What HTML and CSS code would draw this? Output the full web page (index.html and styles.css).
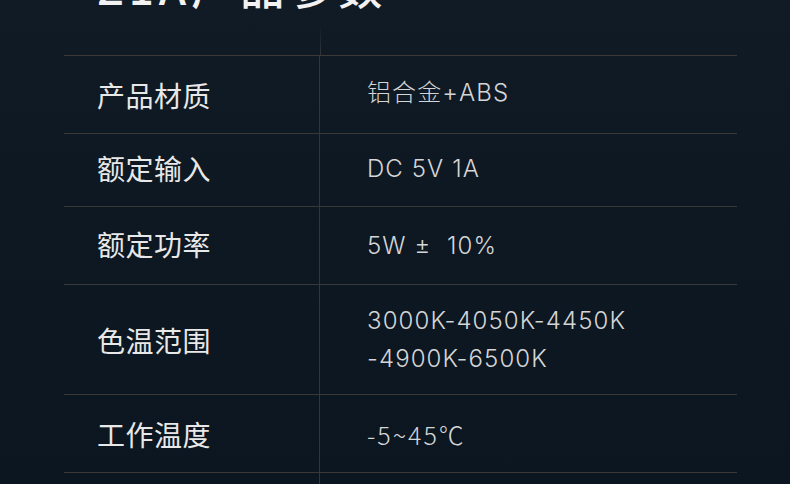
FILE: index.html
```html
<!DOCTYPE html>
<html lang="zh-CN">
<head>
<meta charset="utf-8">
<link rel="stylesheet" href="styles.css">
</head>
<body>
<div class="page">
  <h1 class="title">Z1A产品参数</h1>
  <div class="spec">
    <div class="row r1"><div class="label">产品材质</div><div class="value up">铝合金+ABS</div></div>
    <div class="row r2"><div class="label">额定输入</div><div class="value">DC 5V 1A</div></div>
    <div class="row r3"><div class="label">额定功率</div><div class="value">5W ±&nbsp;&nbsp;10%</div></div>
    <div class="row r4"><div class="label">色温范围</div><div class="value multi">3000K-4050K-4450K<br>-4900K-6500K</div></div>
    <div class="row r5"><div class="label">工作温度</div><div class="value temp">-5~45℃</div></div>
    <div class="row r6"><div class="label"></div><div class="value"></div></div>
  </div>
</div>
</body>
</html>
```
FILE: styles.css
```css
html, body {
  margin: 0;
  padding: 0;
}
body {
  width: 790px;
  height: 484px;
  overflow: hidden;
  background: linear-gradient(180deg, #111b26 0%, #0d1822 40%, #0b1620 100%);
  font-family: "Noto Sans CJK SC", "Noto Sans", sans-serif;
}
.page {
  position: relative;
  height: 484px;
  overflow: hidden;
}
.title {
  margin: -36px 0 0 97px;
  font-size: 44px;
  line-height: 44px;
  height: 44px;
  font-weight: 500;
  color: #f2f2f2;
  letter-spacing: 5px;
  white-space: nowrap;
}
.spec {
  margin: 47px 0 0 64px;
  width: 673px;
  position: relative;
}
.spec::before {
  content: "";
  position: absolute;
  left: 256px;
  top: -30px;
  height: 30px;
  width: 1px;
  background: linear-gradient(180deg, rgba(70,72,74,0) 0%, rgba(70,72,74,0.6) 100%);
}
.row {
  display: grid;
  grid-template-columns: 256px 1fr;
  border-top: 1px solid #3a3936;
}
.r1 { height: 77px; }
.r2 { height: 72px; }
.r3 { height: 77px; }
.r4 { height: 109px; }
.r5 { height: 77px; }
.r6 { height: 11px; }
.label {
  display: flex;
  align-items: center;
  padding-left: 33px;
  font-size: 28px;
  font-weight: 400;
  color: #e8e8e8;
  letter-spacing: 0.5px;
  border-right: 1px solid #353535;
}
.r2 .label { padding-bottom: 4px; }
.r3 .label { padding-bottom: 3px; }
.value {
  display: flex;
  align-items: center;
  padding-left: 47px;
  font-family: "Inter", "Noto Sans CJK SC", sans-serif;
  font-size: 24px;
  font-weight: 300;
  color: #d4d5d6;
  letter-spacing: 1.1px;
}
.r2 .value { padding-bottom: 3px; }
.value.up {
  padding-bottom: 9px;
}
.value.multi {
  line-height: 38px;
  padding-bottom: 0;
}
.value.temp {
  font-family: "Noto Sans CJK SC", sans-serif;
  font-size: 25px;
  font-weight: 300;
  letter-spacing: 2px;
}
```
